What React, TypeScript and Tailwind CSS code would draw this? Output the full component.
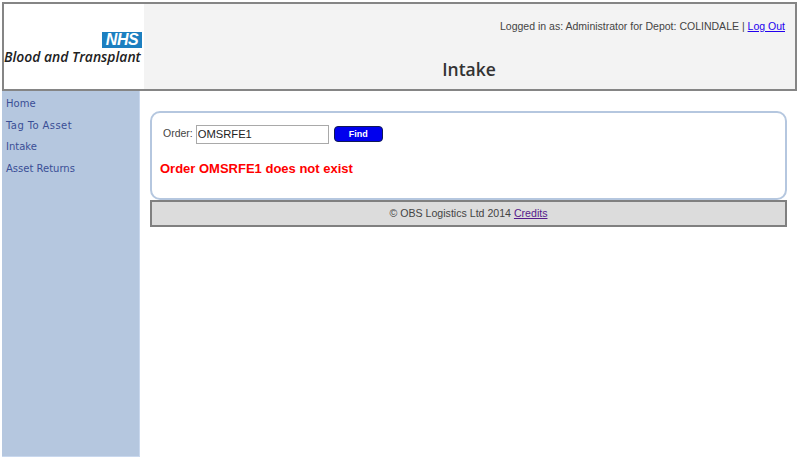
export default function App() {
  const sans = "font-['Liberation_Sans',Arial,sans-serif]";
  return (
    <div className={`w-[800px] h-[462px] bg-white pt-[2px] pl-[2px] overflow-hidden ${sans}`}>
      <header className="flex h-[89px] w-[795px] border-2 border-[#858585] bg-[#f3f3f3]">
        <div className="w-[140px] shrink-0 bg-white flex flex-col items-end pt-[28px] pr-[1px]">
          <div className="w-[40px] h-[16px] mr-[1px] bg-[#1c7fc0] flex items-center justify-center text-white italic font-bold text-[16px] leading-none tracking-[-0.5px]">NHS</div>
          <div className="mt-[2px] w-[139px] text-[#222] italic font-semibold text-[13.9px] leading-[14px] whitespace-nowrap font-['Open_Sans',sans-serif]">Blood and Transplant</div>
        </div>
        <div className="flex-1 flex flex-col min-w-0">
          <div className="text-right text-[10.52px] leading-[13px] text-[#444] pt-[16px] pr-[10px]">
            Logged in as: Administrator for Depot: COLINDALE | <a href="#" className="text-[#2200ee] underline">Log Out</a>
          </div>
          <h1 className="mt-[24px] text-center text-[#333] font-semibold text-[17.5px] leading-[24px] font-['Open_Sans',sans-serif] pr-[1px]">Intake</h1>
        </div>
      </header>
      <div className="flex h-[366px] w-[795px]">
        <nav className="w-[138px] shrink-0 bg-[#b5c7df] border-r border-b border-[#c9d8ee] pl-[4px] pt-[2px] text-[10px] font-['DejaVu_Sans',sans-serif] text-[#3a4e96] flex flex-col">
          <a href="#" className="h-[21px] leading-[21px]">Home</a>
          <a href="#" className="h-[21px] leading-[21px] mt-[0.5px] tracking-[0.4px]">Tag To Asset</a>
          <a href="#" className="h-[21px] leading-[21px] mt-[0.5px]">Intake</a>
          <a href="#" className="h-[21px] leading-[21px] mt-[0.5px]">Asset Returns</a>
        </nav>
        <main className="flex-1 pl-[10px] pt-[20px] pr-[10px]">
          <section className="h-[89px] rounded-[10px] border-2 border-[#b5c7df] bg-white pl-[8px] pt-[11px]">
            <div className="flex items-center h-[20px]">
              <label className="text-[10.5px] text-[#444] ml-[3px] mr-[3px]">Order:</label>
              <input readOnly value="OMSRFE1" className="w-[133px] h-[19px] border border-[#a9a9a9] bg-white px-[1px] text-[11.2px] text-[#222] outline-none" />
              <button className="ml-[5px] w-[49px] h-[16px] rounded-[4px] bg-[#0000ee] border border-[#111a55] text-white text-[9px] font-bold leading-none">Find</button>
            </div>
            <p className="mt-[16px] text-[#ff0000] font-bold text-[13px] leading-[18px]">Order OMSRFE1 does not exist</p>
          </section>
          <footer className="h-[27px] border-2 border-[#808080] bg-[#dcdcdc] text-center text-[10.6px] leading-[23px] text-[#444]">
            © OBS Logistics Ltd 2014 <a href="#" className="text-[#551a8b] underline">Credits</a>
          </footer>
        </main>
      </div>
    </div>
  );
}
